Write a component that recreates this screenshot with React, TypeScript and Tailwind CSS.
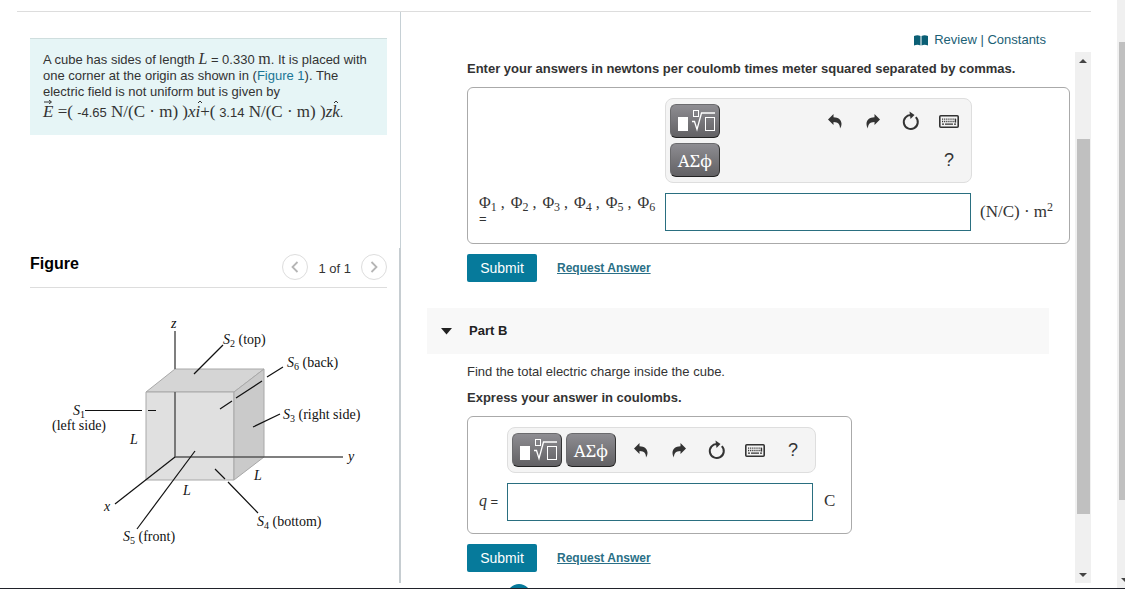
import type { ReactNode } from "react";

const phis = [1, 2, 3, 4, 5, 6];

function RootIcon() {
  return (
    <svg width="48" height="32" viewBox="0 0 48 32" fill="none" stroke="#fff">
      <rect x="7" y="12" width="10" height="14" fill="#fff" stroke="none" />
      <rect x="22.5" y="5.5" width="5" height="6" />
      <path d="M21 16.5h2.5L26 24.5L30.5 8H44" strokeWidth="1.3" />
      <rect x="34.5" y="12.5" width="9" height="13" />
    </svg>
  );
}

function UndoIcon({ flip = false }: { flip?: boolean }) {
  return (
    <svg width="14" height="15" viewBox="0 0 14 15" fill="#333">
      <path
        transform={flip ? "matrix(-1 0 0 1 14 0)" : undefined}
        d="M0 5.5L5.5 0V3.2C10.5 3.3 13.3 5.8 13.5 9.5C13.6 11.4 13 13 12 14.5C12 10.5 10.5 8.1 5.5 8V11Z"
      />
    </svg>
  );
}

function ResetIcon() {
  return (
    <svg width="18" height="20" viewBox="0 0 18 20">
      <path d="M13.8 6.1A7 7 0 1 1 9 4" fill="none" stroke="#333" strokeWidth="2" />
      <path d="M7.5 0.5L12.5 4L8.5 8Z" fill="#333" />
    </svg>
  );
}

function KeyboardIcon() {
  return (
    <svg width="20" height="13" viewBox="0 0 20 13" fill="none" stroke="#333">
      <rect x="0.8" y="0.8" width="18.4" height="11.4" rx="1" strokeWidth="1.6" />
      <path d="M3 4.2H17M3 6.5H17" strokeWidth="1.3" strokeDasharray="1.2 0.9" />
      <path d="M3 9.2h2M6 9.2h8M15 9.2h2M16.5 4v3.5" strokeWidth="1.3" />
    </svg>
  );
}

function KeyButton({ label, children }: { label: string; children: ReactNode }) {
  return (
    <button
      aria-label={label}
      className="flex h-[34px] w-[50px] items-center justify-center rounded-md border border-[#6b6b6e] border-r-[#333] border-b-[#222] bg-linear-to-b from-[#8e8d92] to-[#626164] font-['Noto_Serif','DejaVu_Serif',serif] text-[17px] leading-none text-white"
    >
      {children}
    </button>
  );
}

function Tool({ label, last = false, children }: { label: string; last?: boolean; children: ReactNode }) {
  return (
    <button
      aria-label={label}
      className={`flex h-[34px] w-[38px] items-center justify-center text-lg text-[#333] ${last ? "col-start-4" : ""}`}
    >
      {children}
    </button>
  );
}

function Toolbar({ stacked = false }: { stacked?: boolean }) {
  return (
    <div className="flex justify-between rounded-lg border border-[#dedede] bg-[#f4f4f4] py-[5px] pr-[3px] pl-1">
      <div className={stacked ? "flex flex-col gap-[5px]" : "flex gap-1"}>
        <KeyButton label="Templates"><RootIcon /></KeyButton>
        <KeyButton label="Symbols">ΑΣϕ</KeyButton>
      </div>
      <div className={stacked ? "grid grid-cols-4 gap-y-[5px]" : "flex"}>
        <Tool label="Undo"><UndoIcon /></Tool>
        <Tool label="Redo"><UndoIcon flip /></Tool>
        <Tool label="Reset"><ResetIcon /></Tool>
        <Tool label="Keyboard shortcuts"><KeyboardIcon /></Tool>
        <Tool label="Help" last={stacked}>?</Tool>
      </div>
    </div>
  );
}

function Actions() {
  return (
    <div className="mt-[10px] flex items-center gap-5">
      <button className="h-7 w-[70px] rounded-xs bg-[#067a9b] text-sm text-white">Submit</button>
      <a href="#" className="text-xs font-bold text-[#2a6f86] underline">Request Answer</a>
    </div>
  );
}

function Scrollbar({ thumb, children }: { thumb: string; children?: ReactNode }) {
  return (
    <div className="flex w-4 shrink-0 flex-col items-center bg-[#f0f0f0]">
      {children}
      <div className={`w-[13px] shrink-0 bg-[#c0c0c0] ${thumb}`} />
      <svg width="16" height="16" viewBox="0 0 16 16" className="mt-auto shrink-0">
        <path d="M4 6L8 10L12 6Z" fill="#444" />
      </svg>
    </div>
  );
}

function Sub({ n, text }: { n: number; text?: string }) {
  return (
    <>
      <tspan fontStyle="italic">S</tspan>
      <tspan dy="3" fontSize="10">{n}</tspan>
      {text && <tspan dy="-3"> {text}</tspan>}
    </>
  );
}

function CubeFigure() {
  return (
    <svg
      width="357"
      height="240"
      viewBox="30 312 357 240"
      className="font-['Liberation_Serif',serif] text-sm"
      fill="#111"
    >
      {/* cube faces */}
      <path d="M146 392L175 369H264L234 392Z" fill="#d5d5d5" stroke="#a8a8a8" />
      <path d="M146 392H234V480H146Z" fill="#e0e0e0" stroke="#a8a8a8" />
      <path d="M234 392L264 369V457L234 480Z" fill="#cacaca" stroke="#a8a8a8" />
      {/* axes */}
      <g fill="none" stroke="#555" strokeWidth="1.5">
        <path d="M175 331V369M175 392V457H343" />
      </g>
      {/* leader lines */}
      <g fill="none" stroke="#111" strokeWidth="1.2">
        <path d="M175 457L115 504" />
        <path d="M223 345L194 374" />
        <path d="M85 410.5H142M148 410.5H156" />
        <path d="M283 367L267 377M262 381L236 398M232 401L220 409" />
        <path d="M280 414L253 427" />
        <path d="M195 451L137 529" />
        <path d="M215 469L225 479M228 482L258 513" />
      </g>
      <text x="171" y="328" fontStyle="italic">z</text>
      <text x="348" y="461" fontStyle="italic">y</text>
      <text x="104" y="511" fontStyle="italic">x</text>
      <text x="130" y="444" fontStyle="italic">L</text>
      <text x="183" y="495" fontStyle="italic">L</text>
      <text x="254" y="480" fontStyle="italic">L</text>
      <text x="73" y="415"><Sub n={1} /></text>
      <text x="52" y="430">(left side)</text>
      <text x="223" y="344"><Sub n={2} text="(top)" /></text>
      <text x="287" y="367"><Sub n={6} text="(back)" /></text>
      <text x="283" y="419"><Sub n={3} text="(right side)" /></text>
      <text x="257" y="526"><Sub n={4} text="(bottom)" /></text>
      <text x="123" y="541"><Sub n={5} text="(front)" /></text>
    </svg>
  );
}

// Letter with a vector arrow or unit hat above it
function Accent({ mark, children }: { mark: "arrow" | "hat"; children: ReactNode }) {
  return (
    <span className="relative inline-block italic">
      {children}
      <svg
        viewBox="0 0 8 4"
        className="absolute inset-x-0 top-0 mx-auto h-1 w-2"
        fill="none"
        stroke="#333"
      >
        <path d={mark === "arrow" ? "M0 2H7M5 0L7.5 2L5 4" : "M2 3L4 1L6 3"} />
      </svg>
    </span>
  );
}

function Problem() {
  return (
    <section className="mt-[26px] border-t border-[#cfdede] bg-[#e6f5f6] pt-3 pr-3 pb-2.5 pl-[13px] text-[13px] leading-4 text-[#333]">
      <p>
        A cube has sides of length <i className="font-['Liberation_Serif',serif] text-base leading-none">L</i> = 0.330{" "}
        <span className="font-['Liberation_Serif',serif] text-base leading-none">m</span>. It is placed with one corner
        at the origin as shown in (<a href="#" className="text-[#1a7595]">Figure 1</a>). The electric field is not
        uniform but is given by
      </p>
      <p className="font-['Liberation_Serif',serif] text-[17px] leading-6 whitespace-nowrap">
        <Accent mark="arrow">E</Accent> =( <span className="font-['Liberation_Sans',sans-serif] text-[13px]">-4.65</span>{" "}
        N/(C · m) )<i>x</i><Accent mark="hat">i</Accent>+(
        <span className="font-['Liberation_Sans',sans-serif] text-[13px]"> 3.14</span> N/(C · m) )<i>z</i>
        <Accent mark="hat">k</Accent>
        <span className="font-['Liberation_Sans',sans-serif] text-[13px]">.</span>
      </p>
    </section>
  );
}

export default function App() {
  return (
    <div className="flex h-screen overflow-hidden border-b border-[#20222a] bg-white font-['Liberation_Sans',Arial,sans-serif] text-[13px] leading-4 text-[#333]">
      <main className="mt-[11px] mr-[26px] ml-[17px] flex min-w-0 flex-1 border-t border-[#ddd]">
        {/* Problem and figure */}
        <aside className="mb-[5px] flex w-[384px] shrink-0">
          <div className="flex-1 pr-3 pl-[13px]">
            <Problem />
            <div className="mt-[113px] flex items-center justify-between border-b border-[#ddd] pt-1.5 pb-[7px]">
              <h2 className="pb-1.5 text-base leading-5 font-bold text-black">Figure</h2>
              <div className="flex items-center gap-2.5">
                <button aria-label="Previous" className="flex size-[26px] items-center justify-center rounded-full border border-[#ddd]">
                  <svg width="8" height="12" viewBox="0 0 8 12" fill="none" stroke="#b5b5b5" strokeWidth="1.8">
                    <path d="M6.5 1L1.5 6L6.5 11" />
                  </svg>
                </button>
                <span className="pt-[3px]">1 of 1</span>
                <button aria-label="Next" className="flex size-[26px] items-center justify-center rounded-full border border-[#ddd]">
                  <svg width="8" height="12" viewBox="0 0 8 12" fill="none" stroke="#b5b5b5" strokeWidth="1.8">
                    <path d="M1.5 1L6.5 6L1.5 11" />
                  </svg>
                </button>
              </div>
            </div>
            <div className="mt-6"><CubeFigure /></div>
          </div>
          <div className="flex w-0.5 flex-col items-end">
            <div className="h-[236px] w-px bg-[#c6d0d5]" />
            <div className="w-full flex-1 bg-[#c6cdd1]" />
          </div>
        </aside>

        {/* Answer pane */}
        <section className="flex min-w-0 flex-1 flex-col">
          <div className="flex h-10 items-center justify-end gap-1.5 pt-4 pr-[45px] text-[#1b6075]">
            <svg width="14" height="11" viewBox="0 0 14 11" fill="#0b5f75">
              <path d="M0 1Q3.5-0.5 6.5 1V10.5Q3.5 9 0 10.5ZM7.5 1Q10.5-0.5 14 1V10.5Q10.5 9 7.5 10.5Z" />
            </svg>
            <div>
              <a href="#">Review</a> | <a href="#">Constants</a>
            </div>
          </div>
          <div className="flex min-h-0 flex-1">
            <div className="min-w-0 flex-1 overflow-hidden pt-[9px] pr-[5px] pl-[26px]">
              <div className="pl-10">
                <p className="font-bold">Enter your answers in newtons per coulomb times meter squared separated by commas.</p>
                <div className="mt-[10px] flex items-end rounded-md border border-[#aaa] pt-[10px] pb-3 pl-[11px]">
                  <label
                    htmlFor="flux"
                    className="mb-1.5 w-[186px] shrink-0 font-['Liberation_Serif',serif] text-base leading-5 whitespace-nowrap"
                  >
                    <span className="flex gap-1.5">
                      {phis.map((n) => (
                        <span key={n}>
                          Φ<sub className="text-xs leading-none">{n}</sub>
                          {n < 6 && " ,"}
                        </span>
                      ))}
                    </span>
                    <span className="block font-['Liberation_Sans',sans-serif] text-[13px] leading-3">=</span>
                  </label>
                  <div className="w-[307px]">
                    <Toolbar stacked />
                    <input id="flux" className="mt-[10px] block h-[38px] w-[306px] border border-[#2a6f80] px-2 outline-none" />
                  </div>
                  <span className="mb-[7px] ml-2 font-['Liberation_Serif',serif] text-[17px] leading-6">
                    (N/C) · m<sup className="text-xs">2</sup>
                  </span>
                </div>
                <Actions />
              </div>

              <button className="mt-[26px] flex h-[46px] w-[622px] max-w-full items-center gap-[17px] bg-[#f8f8f8] pl-3.5 font-bold text-[#222]">
                <svg width="11" height="7" viewBox="0 0 11 7" fill="#222">
                  <path d="M0 0H11L5.5 6.5Z" />
                </svg>
                Part B
              </button>

              <div className="pt-[10px] pl-10">
                <p>Find the total electric charge inside the cube.</p>
                <p className="mt-[10px] font-bold">Express your answer in coulombs.</p>
                <div className="mt-[10px] flex w-fit items-end rounded-md border border-[#aaa] pt-[10px] pr-4 pb-3 pl-[11px]">
                  <label htmlFor="charge" className="mb-2.5 w-7">
                    <i className="font-['Liberation_Serif',serif] text-base leading-5">q</i> =
                  </label>
                  <div className="w-[309px]">
                    <Toolbar />
                    <input id="charge" className="mt-[10px] block h-[38px] w-[306px] border border-[#2a6f80] px-2 outline-none" />
                  </div>
                  <span className="mb-2 ml-2 font-['Liberation_Serif',serif] text-[17px] leading-6">C</span>
                </div>
                <Actions />
                <div className="mt-3 ml-10 size-6 rounded-full bg-[#067a9b]" />
              </div>
            </div>
            <div className="mb-[5px] flex">
              <Scrollbar thumb="h-[375px]">
                <svg width="16" height="16" viewBox="0 0 16 16" className="mb-[71px] shrink-0">
                  <path d="M4 11L8 7L12 11Z" fill="#444" />
                </svg>
              </Scrollbar>
            </div>
          </div>
        </section>
      </main>

      {/* Page scrollbar, running off the right edge */}
      <div className="flex w-2 shrink-0 overflow-hidden">
        <Scrollbar thumb="mt-[42px] h-[458px]" />
      </div>
    </div>
  );
}
